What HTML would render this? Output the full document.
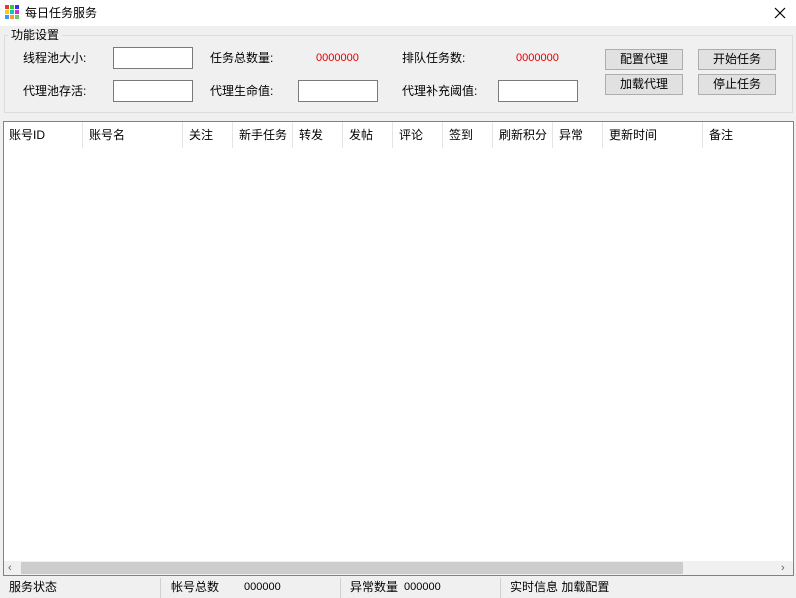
<!DOCTYPE html>
<html><head><meta charset="utf-8"><style>
*{margin:0;padding:0;box-sizing:border-box}
body{width:796px;height:598px;position:relative;overflow:hidden;background:#f0f0f0;font-family:"Liberation Sans","Noto Sans CJK SC",sans-serif;font-size:12px;color:#000}
.a{position:absolute;white-space:nowrap;line-height:16px}
.in{position:absolute;background:#fff;border:1px solid #7a7a7a;width:80px;height:22px}
.btn{position:absolute;background:#e1e1e1;border:1px solid #adadad;width:78px;height:21px;text-align:center;line-height:19px}
.red{color:#e00000;font-size:11px}
.col{position:absolute;top:122px;height:26px;border-right:1px solid #e5e5e5;line-height:26px;padding-left:6px;white-space:nowrap;overflow:hidden}
.sb{position:absolute;top:576px;height:22px;line-height:22px;white-space:nowrap}
</style></head><body>
<div style="position:absolute;left:0;top:0;width:796px;height:26px;background:#fff"></div>
<svg class="a" style="left:5px;top:5px" width="14" height="14"><rect x="0" y="0" width="4" height="4" fill="#e33"/><rect x="5" y="0" width="4" height="4" fill="#3c3"/><rect x="10" y="0" width="4" height="4" fill="#33e"/><rect x="0" y="5" width="4" height="4" fill="#fc0"/><rect x="5" y="5" width="4" height="4" fill="#0cc"/><rect x="10" y="5" width="4" height="4" fill="#c3c"/><rect x="0" y="10" width="4" height="4" fill="#39f"/><rect x="5" y="10" width="4" height="4" fill="#f93"/><rect x="10" y="10" width="4" height="4" fill="#6c6"/></svg>
<div class="a" style="left:25px;top:5px">每日任务服务</div>
<svg class="a" style="left:774px;top:7px" width="12" height="12"><path d="M1 1L11 11M11 1L1 11" stroke="#000" stroke-width="1.2"/></svg>
<div style="position:absolute;left:4px;top:35px;width:789px;height:78px;border:1px solid #dcdcdc"></div>
<div class="a" style="left:8px;top:27px;background:#f0f0f0;padding:0 3px">功能设置</div>
<div class="a" style="left:23px;top:50px">线程池大小:</div>
<div class="in" style="left:113px;top:47px"></div>
<div class="a" style="left:210px;top:50px">任务总数量:</div>
<div class="a red" style="left:316px;top:50px">0000000</div>
<div class="a" style="left:402px;top:50px">排队任务数:</div>
<div class="a red" style="left:516px;top:50px">0000000</div>
<div class="a" style="left:23px;top:83px">代理池存活:</div>
<div class="in" style="left:113px;top:80px"></div>
<div class="a" style="left:210px;top:83px">代理生命值:</div>
<div class="in" style="left:298px;top:80px"></div>
<div class="a" style="left:402px;top:83px">代理补充阈值:</div>
<div class="in" style="left:498px;top:80px"></div>
<div class="btn" style="left:605px;top:49px">配置代理</div>
<div class="btn" style="left:605px;top:74px">加载代理</div>
<div class="btn" style="left:698px;top:49px">开始任务</div>
<div class="btn" style="left:698px;top:74px">停止任务</div>
<div style="position:absolute;left:3px;top:121px;width:791px;height:455px;background:#fff;border:1px solid #828282"></div>
<div class="col" style="left:4px;width:79px;padding-left:5px">账号ID</div>
<div class="col" style="left:83px;width:100px">账号名</div>
<div class="col" style="left:183px;width:50px">关注</div>
<div class="col" style="left:233px;width:60px">新手任务</div>
<div class="col" style="left:293px;width:50px">转发</div>
<div class="col" style="left:343px;width:50px">发帖</div>
<div class="col" style="left:393px;width:50px">评论</div>
<div class="col" style="left:443px;width:50px">签到</div>
<div class="col" style="left:493px;width:60px">刷新积分</div>
<div class="col" style="left:553px;width:50px">异常</div>
<div class="col" style="left:603px;width:100px">更新时间</div>
<div class="col" style="left:703px;width:90px;border:none">备注</div>
<div style="position:absolute;left:4px;top:561px;width:789px;height:14px;background:#f0f0f0"></div>
<div style="position:absolute;left:21px;top:562px;width:662px;height:12px;background:#cdcdcd"></div>
<div class="a" style="left:8px;top:560px;font-size:11px;color:#606060">&lsaquo;</div>
<div class="a" style="left:781px;top:560px;font-size:11px;color:#606060">&rsaquo;</div>
<div class="sb" style="left:9px">服务状态</div>
<div style="position:absolute;left:160px;top:578px;height:20px;border-left:1px solid #d0d0d0"></div>
<div class="sb" style="left:171px">帐号总数</div>
<div class="sb" style="left:244px;font-size:11px">000000</div>
<div style="position:absolute;left:340px;top:578px;height:20px;border-left:1px solid #d0d0d0"></div>
<div class="sb" style="left:350px">异常数量</div>
<div class="sb" style="left:404px;font-size:11px">000000</div>
<div style="position:absolute;left:500px;top:578px;height:20px;border-left:1px solid #d0d0d0"></div>
<div class="sb" style="left:510px">实时信息&nbsp;加载配置</div>
</body></html>
